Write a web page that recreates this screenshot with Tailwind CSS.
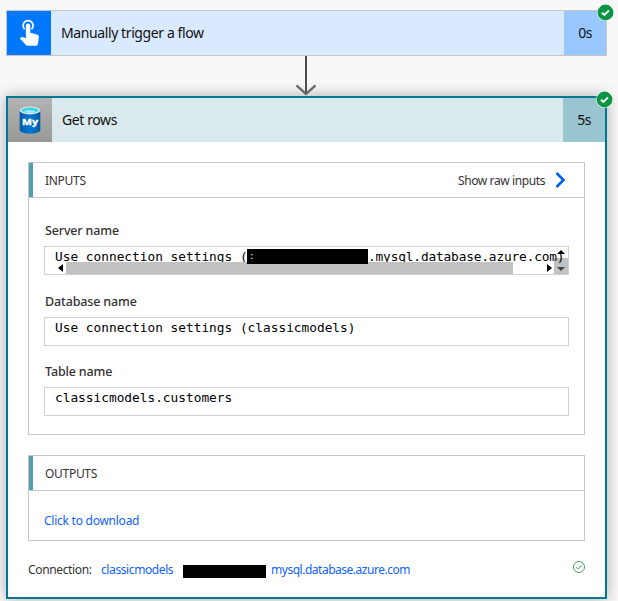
<!DOCTYPE html>
<html lang="en">
<head>
<meta charset="utf-8">
<title>Flow run</title>
<script src="https://cdn.jsdelivr.net/npm/@tailwindcss/browser@4"></script>
</head>
<body class="h-[601px] w-[618px] overflow-hidden bg-[#f8f8f8] pt-[10px] pl-[6px] font-['Noto_Sans',sans-serif] text-[12px] text-[#333]">
<div class="relative flex h-[46px] w-[601px] border border-[#c8c6c4] bg-[#d9eaff] text-[14px] text-[#111]">
  <div class="flex w-[44px] items-center justify-center bg-[#0077ff] pl-[2px]">
    <svg class="h-[28px] w-[22px]" viewBox="0 0 22 28"><path d="M5.700 10.200A5 5 0 1 1 12.500 10.200" fill="none" stroke="#fff" stroke-width="1.700"/><path d="M6.900 6.600a2.200 2.200 0 0 1 4.400 0v7.100l7.200 2.100q1.600.5 1.400 2l-1 7.200q-.3 1.800-2 1.800H8.700q-1.100 0-1.800-.8L.9 19.600l1-1.100q.8-.7 1.800-.4l3.200 1.200z" fill="#fff"/></svg>
  </div>
  <div class="flex flex-1 items-center pb-px pl-[10px]"><span class="tracking-[-0.4px]">Manually trigger a flow</span></div>
  <div class="flex w-[42px] items-center justify-center bg-[#99c7ff] pb-px tracking-[-0.5px]">0s</div>
  <svg class="absolute top-[-7px] left-[590px] size-[17px]" viewBox="0 0 17 17"><circle cx="8.500" cy="8.500" r="8.500" fill="#fff"/><circle cx="8.500" cy="8.500" r="7.900" fill="#0b9444"/><path d="M5 8.700l2.400 2.300L12 6.400" fill="none" stroke="#fff" stroke-width="1.900"/></svg>
</div>
<div class="h-[40px] w-[601px] pl-[289px]">
  <svg class="relative z-10 h-[40px] w-[22px]" viewBox="0 0 22 40"><path d="M11 0V37" fill="none" stroke="#4d4d4d" stroke-width="2"/><path d="M1.500 29.300L11 38l9.500-8.700" fill="none" stroke="#666" stroke-width="2.300"/></svg>
</div>
<div class="relative h-[503px] w-[601px] border-2 border-[#007891] bg-white shadow-[0_0_14px_rgba(0,0,0,0.3)]">
  <div class="flex h-[44px] bg-[#d9e9ed] text-[14px] text-[#111]">
    <div class="flex w-[44px] items-center justify-center bg-linear-to-b from-[#b3b3b3] to-[#999]">
      <svg class="h-[28px] w-[22px]" viewBox="0 0 22 28"><defs><linearGradient id="g"><stop stop-color="#005ba1"/><stop offset=".5" stop-color="#0078d4"/><stop offset="1" stop-color="#005ba1"/></linearGradient></defs><path d="M.7 4.500V24c0 2 4.600 3.700 10.300 3.700S21.300 26 21.300 24V4.500z" fill="url(#g)"/><ellipse cx="11" cy="4.500" rx="10.300" ry="3.900" fill="#e8e8e8"/><ellipse cx="11" cy="4.300" rx="8.600" ry="2.700" fill="#32d4e5"/><ellipse cx="11" cy="5.500" rx="5.700" ry="1.400" fill="#9cebff"/><text x="11" y="18.500" text-anchor="middle" textLength="16" lengthAdjust="spacingAndGlyphs" font-family="Noto Sans" font-weight="800" font-size="9.500" fill="#fff" stroke="#fff" stroke-width=".3">My</text></svg>
    </div>
    <div class="flex flex-1 items-center pb-[2px] pl-[10px]"><span class="tracking-[-0.4px]">Get rows</span></div>
    <div class="flex w-[42px] items-center justify-center bg-[#99c5d0] pb-[2px] tracking-[-0.5px]">5s</div>
  </div>
  <svg class="absolute top-[-7.500px] left-[587.500px] size-[17px]" viewBox="0 0 17 17"><circle cx="8.500" cy="8.500" r="8.500" fill="#fff"/><circle cx="8.500" cy="8.500" r="7.900" fill="#0b9444"/><path d="M5 8.700l2.400 2.300L12 6.400" fill="none" stroke="#fff" stroke-width="1.900"/></svg>

  <section class="mt-[20px] ml-[20px] h-[273px] w-[557px] border border-[#c6c6c6]">
    <div class="flex h-[35px] items-center border-b border-[#c6c6c6]">
      <div class="h-full w-[4px] bg-[#4f9fb0]"></div>
      <span class="mt-[2px] ml-[12px] tracking-[-0.3px]">INPUTS</span>
      <span class="mt-[2px] ml-auto tracking-[-0.4px]">Show raw inputs</span>
      <svg class="mr-[18px] ml-[10px] h-[16px] w-[11px]" viewBox="0 0 11 16"><path d="M1.500 1l7 7-7 7" fill="none" stroke="#0060f0" stroke-width="2.600"/></svg>
    </div>
    <div class="pl-[15px]">
      <div class="mt-[24px] h-[24px] pl-px text-[12.500px] leading-[18px] font-medium tracking-[-0.15px]">Server name</div>
      <div class="relative h-[29px] w-[525px] overflow-hidden border border-[#d0d0d0] pl-[10px] font-['DejaVu_Sans_Mono',monospace] text-[12.800px] leading-[20px] whitespace-nowrap text-black">
        <div class="absolute top-[11px] left-[509px] h-[16px] w-[14px] bg-[#c1c1c1]"></div>
        <div class="flex"><span class="w-[192px] shrink-0">Use connection settings (</span><span class="relative z-10 h-[15px] w-[121px] shrink-0 translate-y-[2px] bg-black text-[9px] leading-[15px] text-white"><span class="ml-[2px]">:</span></span><span class="relative tracking-[-0.15px]">.mysql.database.azure.com)</span></div>
        <div class="absolute top-[15px] left-0 flex h-[12px] w-[509px] items-center">
          <svg class="ml-[13px] h-[8px] w-[5px]" viewBox="0 0 5 8"><path d="M5 0v8L0 4z"/></svg>
          <div class="ml-[3px] h-full w-[447px] bg-[#c1c1c1]"></div>
          <svg class="ml-[34px] h-[8px] w-[5px]" viewBox="0 0 5 8"><path d="M0 0v8l5-4z"/></svg>
        </div>
        <svg class="absolute top-[3px] left-[512px] h-[22px] w-[8px]" viewBox="0 0 8 22"><path d="M4 0l4 4H0z"/><path d="M0 17h8l-4 4z" fill="#444"/></svg>
      </div>
      <div class="mt-[18px] h-[24px] pl-px text-[12.500px] leading-[18px] font-medium tracking-[-0.15px]">Database name</div>
      <div class="h-[29px] w-[525px] border border-[#d0d0d0] pl-[10px] font-['DejaVu_Sans_Mono',monospace] text-[12.800px] leading-[20px] text-black">Use connection settings (classicmodels)</div>
      <div class="mt-[17px] h-[24px] pl-px text-[12.500px] leading-[18px] font-medium tracking-[-0.15px]">Table name</div>
      <div class="h-[29px] w-[525px] border border-[#d0d0d0] pl-[10px] font-['DejaVu_Sans_Mono',monospace] text-[12.800px] leading-[20px] text-black">classicmodels.customers</div>
    </div>
  </section>
  <section class="mt-[20px] ml-[20px] h-[86px] w-[557px] border border-[#c6c6c6]">
    <div class="flex h-[35px] items-center border-b border-[#c6c6c6]">
      <div class="h-full w-[4px] bg-[#4f9fb0]"></div>
      <span class="mt-[2px] ml-[12px] tracking-[-0.3px]">OUTPUTS</span>
    </div>
    <div class="mt-[21px] pl-[15px] leading-[18px] text-[#0f62fe]"><span class="tracking-[-0.25px]">Click to download</span></div>
  </section>
  <div class="mt-[19px] ml-[20px] flex h-[20px] w-[557px] items-center">
    <span class="w-[73px] tracking-[-0.35px]">Connection:</span>
    <span class="w-[82px] tracking-[-0.4px] text-[#0f62fe]">classicmodels</span>
    <span class="mt-[2px] h-[13px] w-[83px] bg-black"></span>
    <span class="ml-[5px] tracking-[-0.48px] text-[#0f62fe]">mysql.database.azure.com</span>
    <svg class="mb-[6px] ml-auto size-[12px]" viewBox="0 0 12 12" fill="none" stroke="#4a9c62" stroke-width="1"><circle cx="6" cy="6" r="5.500"/><path d="M3.300 6.200l1.900 1.900 3.700-3.900"/></svg>
  </div>
</div>
</body>
</html>
